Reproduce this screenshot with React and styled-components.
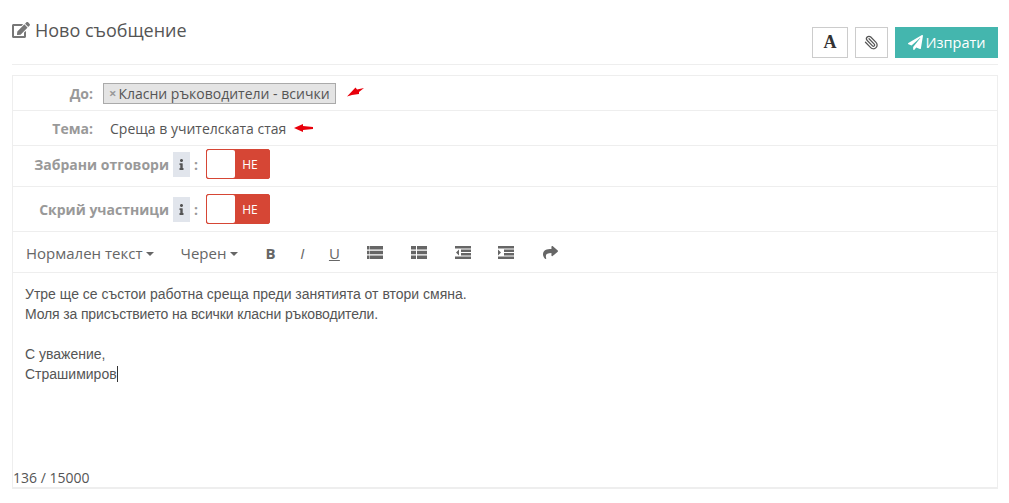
import React from 'react';
import styled, { createGlobalStyle } from 'styled-components';
import { FaEdit, FaPaperPlane, FaInfo, FaShare } from 'react-icons/fa';
import { Paperclip } from 'lucide-react';

const GlobalStyle = createGlobalStyle`
  html, body {
    margin: 0;
    padding: 0;
    background: #fff;
    color: #555;
    font-family: "Open Sans", sans-serif;
  }
  * { box-sizing: border-box; }
`;

const Page = styled.div`
  width: 1009px;
  height: 503px;
  padding: 12px 11px 0 12px;
  overflow: hidden;
`;

const TopBar = styled.div`
  height: 53px;
  display: flex;
  justify-content: space-between;
  border-bottom: 1px solid #eeeeee;
`;

const Title = styled.h1`
  margin: 5px 0 0;
  height: 25px;
  display: flex;
  align-items: center;
  gap: 5px;
  font-size: 18px;
  font-weight: 400;
  color: #555;
  svg { width: 18px; height: 18px; color: #777; }
`;

const Actions = styled.div`
  display: flex;
  gap: 7px;
  padding-top: 15px;
`;

const IconButton = styled.button`
  width: ${p => p.$w}px;
  height: 31px;
  padding: 0;
  display: flex;
  align-items: center;
  justify-content: center;
  background: #fff;
  border: 1px solid #ccc;
  color: #333;
  font-family: "Liberation Serif", serif;
  font-size: 18px;
  font-weight: 700;
  svg { color: #555; transform: scaleX(-1); }
`;

const SendButton = styled.button`
  width: 103px;
  height: 31px;
  padding: 0;
  display: flex;
  align-items: center;
  justify-content: center;
  gap: 3px;
  background: #44b6ae;
  border: 0;
  color: #fff;
  font-family: inherit;
  font-size: 14.5px;
  svg { width: 15px; height: 15px; }
`;

const Panel = styled.div`
  margin-top: 10px;
  height: 414px;
  display: flex;
  flex-direction: column;
  border: 1px solid #eeeeee;
  border-bottom-width: 2px;
`;

const Row = styled.div`
  height: ${p => p.$h}px;
  flex: none;
  display: flex;
  align-items: center;
  padding-bottom: ${p => p.$pb || 0}px;
  border-bottom: 1px solid #eeeeee;
`;

const Label = styled.label`
  width: 80px;
  text-align: right;
  font-size: 14px;
  font-weight: 700;
  color: #999;
`;

const Tag = styled.div`
  margin-left: 10px;
  height: 21px;
  padding: 0 5px;
  display: flex;
  align-items: center;
  gap: 2px;
  background: #e4e4e4;
  border: 1px solid #aaa;
  font-size: 14px;
  color: #555;
`;

const TagRemove = styled.span`
  color: #999;
  font-size: 13px;
  font-weight: 700;
`;

const Subject = styled.div`
  margin-left: 17px;
  font-size: 14px;
  color: #555;
`;

const Arrow = styled.svg`
  margin-left: ${p => p.$ml}px;
  width: 20px;
  height: 12px;
  flex: none;
`;

const OptionLabel = styled.div`
  width: 156px;
  text-align: right;
  font-size: 14px;
  font-weight: 700;
  color: #999;
`;

const InfoBadge = styled.span`
  margin-left: 4px;
  width: 17px;
  height: 25px;
  display: flex;
  align-items: center;
  justify-content: center;
  background: #e1e5ec;
  color: #555;
  svg { width: 11px; height: 11px; }
`;

const Colon = styled.span`
  margin: 0 8px 0 4px;
  font-size: 14px;
  font-weight: 700;
  color: #999;
`;

const Toggle = styled.div`
  width: 64px;
  height: 30px;
  display: flex;
  background: #d64635;
  border: 1px solid #d64635;
  border-radius: 2px;
`;

const Knob = styled.span`
  width: 28px;
  background: #fff;
  border-radius: 2px;
`;

const ToggleText = styled.span`
  flex: 1;
  display: flex;
  align-items: center;
  justify-content: center;
  padding-right: 4px;
  color: #fff;
  font-size: 12px;
`;

const Toolbar = styled(Row)`
  padding-left: 13px;
`;

const ToolDropdown = styled.span`
  margin-right: ${p => p.$mr}px;
  padding-top: 2px;
  display: flex;
  align-items: center;
  gap: 4px;
  font-size: 15px;
  color: #666;
`;

const Caret = styled.i`
  margin-top: 2px;
  width: 0;
  height: 0;
  border-top: 4px solid #666;
  border-left: 4px solid transparent;
  border-right: 4px solid transparent;
`;

const ToolText = styled.span`
  width: ${p => p.$w}px;
  margin-right: ${p => p.$mr}px;
  padding-top: 2px;
  text-align: center;
  font-size: 15px;
  color: #666;
  font-weight: ${p => (p.$bold ? 700 : 400)};
  font-style: ${p => (p.$italic ? 'italic' : 'normal')};
  text-decoration: ${p => (p.$under ? 'underline' : 'none')};
`;

const ToolIcon = styled.svg`
  width: 16px;
  height: 13px;
  margin-right: ${p => p.$mr}px;
  fill: #666;
  flex: none;
`;

const ShareIcon = styled(FaShare)`
  width: 15px;
  height: 15px;
  color: #666;
`;

const Editor = styled.div`
  flex: 1;
  padding: 11px 12px 0;
  font-family: "Liberation Sans", sans-serif;
  font-size: 14px;
  line-height: 20px;
  color: #555;
`;

const EditorLine = styled.div`
  min-height: 20px;
  letter-spacing: ${p => p.$spacing || 0}px;
`;

const Cursor = styled.span`
  display: inline-block;
  width: 1px;
  height: 16px;
  background: #333;
  vertical-align: -3px;
`;

const Counter = styled.div`
  height: 19px;
  font-size: 14px;
  line-height: 20px;
  color: #555;
`;

const RedArrow = ({ ml, tilt }) => (
  <Arrow $ml={ml} viewBox="0 0 20 12">
    <path
      fill="#e8000b"
      d={tilt
        ? 'M1 9.5 L9.5 0.5 L11 2.5 L18 1 L13 5 L13 7 L6 8 Z'
        : 'M0 6 L9 2 L9 4 L19 5 L19 7 L9 8 L9 10 Z'}
    />
  </Arrow>
);

const Switch = () => (
  <Toggle>
    <Knob />
    <ToggleText>НЕ</ToggleText>
  </Toggle>
);

const Bullets = ({ mr }) => (
  <ToolIcon $mr={mr} viewBox="0 0 16 13">
    <path d="M0 0h2.5v3.5H0zM3 0h13v3.5H3zM0 4.75h2.5v3.5H0zM3 4.75h13v3.5H3zM0 9.5h2.5V13H0zM3 9.5h13V13H3z" />
  </ToolIcon>
);

const Numbers = ({ mr }) => (
  <ToolIcon $mr={mr} viewBox="0 0 16 13">
    <path d="M0 0h5v3.5H0zM6 0h10v3.5H6zM0 4.75h5v3.5H0zM6 4.75h10v3.5H6zM0 9.5h5V13H0zM6 9.5h10V13H6z" />
  </ToolIcon>
);

const Outdent = ({ mr }) => (
  <ToolIcon $mr={mr} viewBox="0 0 16 13">
    <path d="M0 0h16v2.5H0zM6 3.5h10v2.5H6zM6 7h10v2.5H6zM0 10.5h16V13H0zM4 3.5v6L1 6.5z" />
  </ToolIcon>
);

const Indent = ({ mr }) => (
  <ToolIcon $mr={mr} viewBox="0 0 16 13">
    <path d="M0 0h16v2.5H0zM6 3.5h10v2.5H6zM6 7h10v2.5H6zM0 10.5h16V13H0zM0 3.5v6l3-3z" />
  </ToolIcon>
);

export default function App() {
  return (
    <>
      <GlobalStyle />
      <Page>
        <TopBar>
          <Title>
            <FaEdit />
            Ново съобщение
          </Title>
          <Actions>
            <IconButton $w={36}>A</IconButton>
            <IconButton $w={33}><Paperclip size={15} strokeWidth={2} /></IconButton>
            <SendButton><FaPaperPlane />Изпрати</SendButton>
          </Actions>
        </TopBar>
        <Panel>
          <Row $h={35}>
            <Label>До:</Label>
            <Tag><TagRemove>×</TagRemove>Класни ръководители - всички</Tag>
            <RedArrow ml={10} tilt />
          </Row>
          <Row $h={35}>
            <Label>Тема:</Label>
            <Subject>Среща в учителската стая</Subject>
            <RedArrow ml={8} />
          </Row>
          <Row $h={41} $pb={4}>
            <OptionLabel>Забрани отговори</OptionLabel>
            <InfoBadge><FaInfo /></InfoBadge>
            <Colon>:</Colon>
            <Switch />
          </Row>
          <Row $h={45}>
            <OptionLabel>Скрий участници</OptionLabel>
            <InfoBadge><FaInfo /></InfoBadge>
            <Colon>:</Colon>
            <Switch />
          </Row>
          <Toolbar $h={41}>
            <ToolDropdown $mr={26}>Нормален текст<Caret /></ToolDropdown>
            <ToolDropdown $mr={27}>Черен<Caret /></ToolDropdown>
            <ToolText $w={10} $mr={23} $bold>B</ToolText>
            <ToolText $w={8} $mr={22} $italic>I</ToolText>
            <ToolText $w={12} $mr={27} $under>U</ToolText>
            <Bullets mr={28} />
            <Numbers mr={28} />
            <Outdent mr={27} />
            <Indent mr={29} />
            <ShareIcon />
          </Toolbar>
          <Editor>
            <EditorLine>Утре ще се състои работна среща преди занятията от втори смяна.</EditorLine>
            <EditorLine $spacing={-0.14}>Моля за присъствието на всички класни ръководители.</EditorLine>
            <EditorLine />
            <EditorLine>С уважение,</EditorLine>
            <EditorLine>Страшимиров<Cursor /></EditorLine>
          </Editor>
          <Counter>136 / 15000</Counter>
        </Panel>
      </Page>
    </>
  );
}
